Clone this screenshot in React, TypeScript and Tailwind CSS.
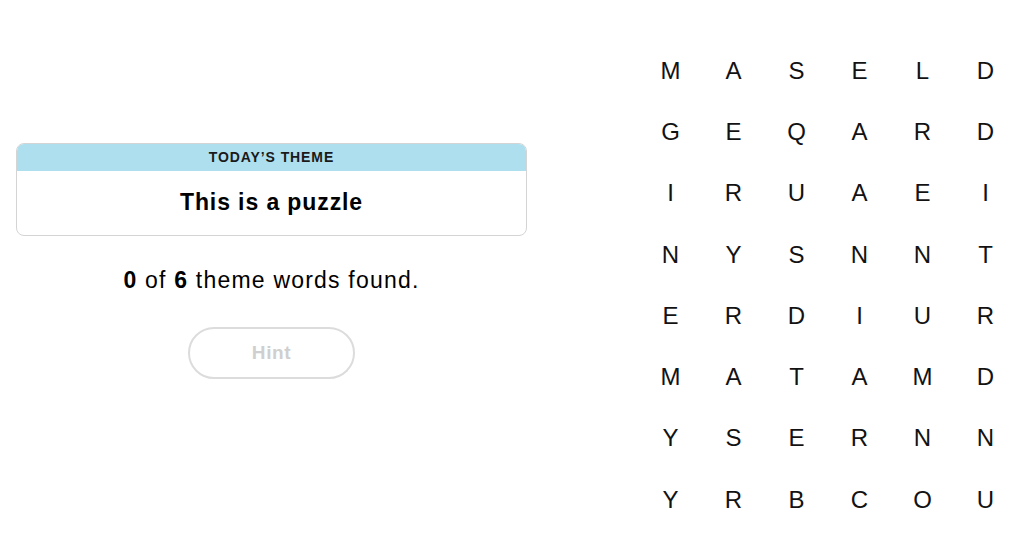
const grid = [
  "MASELD",
  "GEQARD",
  "IRUAEI",
  "NYSNNT",
  "ERDIUR",
  "MATAMD",
  "YSERNN",
  "YRBCOU",
];

export default function App() {
  return (
    <div className="flex h-[554px] w-[1024px] bg-white text-black font-['Liberation_Sans',Arial,sans-serif]">
      <div className="w-[543px] pl-4 pr-4 pt-[143px] flex flex-col items-center">
        <div className="w-[511px] rounded-lg border border-[#d4d4d4] overflow-hidden">
          <div className="h-[27px] bg-[#aedfee] flex items-center justify-center text-[14px] font-semibold tracking-[0.9px] text-[#1a1a1a] uppercase">
            Today’s Theme
          </div>
          <div className="h-[64px] flex items-center justify-center pb-0.5 text-[23px] font-bold tracking-[0.9px]">
            This is a puzzle
          </div>
        </div>
        <p className="mt-[31px] text-[23px] leading-[27px] tracking-[1.2px]">
          <span className="font-bold">0</span> of <span className="font-bold">6</span> theme words found.
        </p>
        <button className="mt-[33px] h-[52px] w-[167px] rounded-full border-2 border-[#dcdcdc] text-[19px] font-bold tracking-[0.6px] text-[#cfcfcf]">
          Hint
        </button>
      </div>
      <div className="ml-[96px] pt-[40px] grid grid-cols-[repeat(6,63px)] auto-rows-[61.3px]">
        {grid.flatMap((row, r) =>
          row.split("").map((ch, c) => (
            <div key={`${r}-${c}`} className="flex items-center justify-center text-[24px] text-[#121212]">
              {ch}
            </div>
          ))
        )}
      </div>
    </div>
  );
}
